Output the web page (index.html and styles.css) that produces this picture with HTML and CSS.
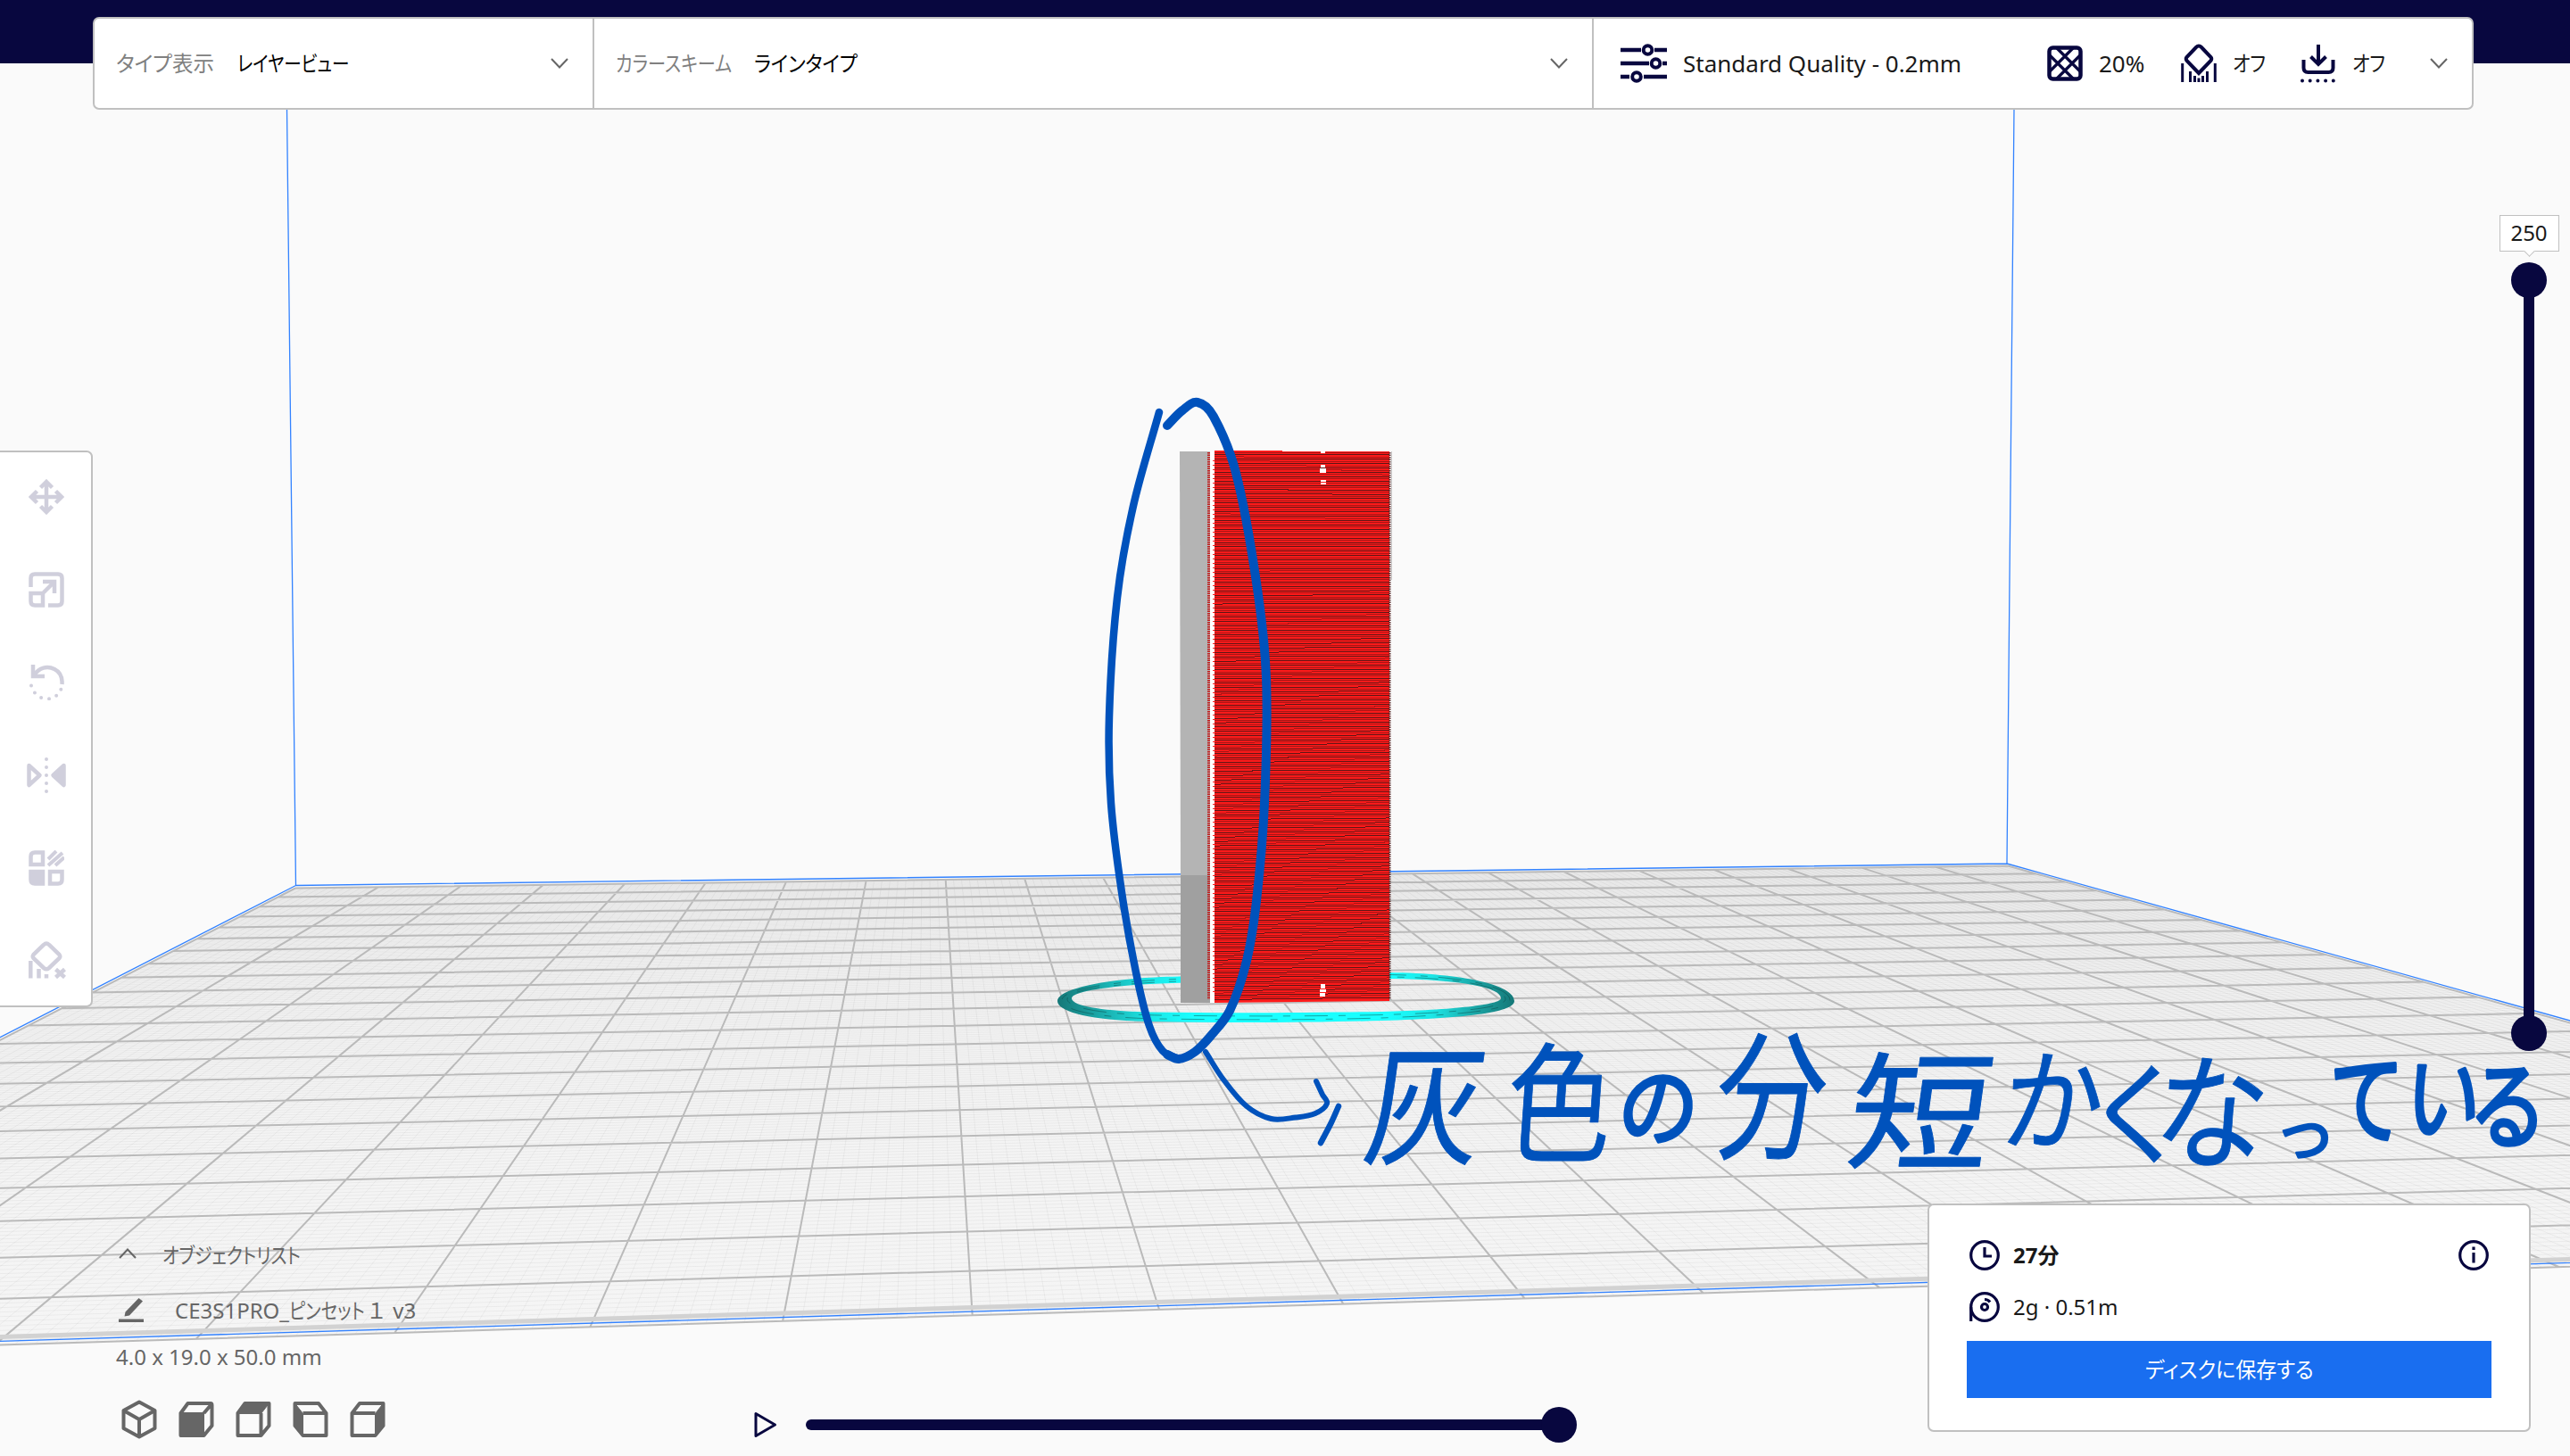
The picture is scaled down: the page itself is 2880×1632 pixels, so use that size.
FILE: index.html
```html
<!DOCTYPE html>
<html lang="ja">
<head>
<meta charset="utf-8">
<title>レイヤービュー</title>
<link rel="stylesheet" href="styles.css">
</head>
<body>
<div class="app">
  <svg class="scene" viewBox="0 0 2880 1632" aria-hidden="true">
    <defs>
      <linearGradient id="plate" x1="0" y1="970" x2="0" y2="1500" gradientUnits="userSpaceOnUse">
        <stop offset="0" stop-color="#f2f2f2"/><stop offset=".4" stop-color="#f3f3f3"/><stop offset="1" stop-color="#f5f5f5"/>
      </linearGradient>
      <linearGradient id="skirt" x1="1185" y1="0" x2="1697" y2="0" gradientUnits="userSpaceOnUse">
        <stop offset="0" stop-color="#157878"/><stop offset=".07" stop-color="#1a9c9c"/><stop offset=".2" stop-color="#1ce6e6"/>
        <stop offset=".3" stop-color="#1affff"/><stop offset=".72" stop-color="#1affff"/><stop offset=".82" stop-color="#1ce6e6"/>
        <stop offset=".93" stop-color="#1a9c9c"/><stop offset="1" stop-color="#157878"/>
      </linearGradient>
    </defs>
    <path class="plate" id="plate-fill"/>
    <path class="grid-minor" id="grid-minor"/>
    <path class="grid-major" id="grid-major"/>
    <path class="plate-edge" d="M0 1498.500L2880 1411.500"/>
    <path class="volume" d="M321.500 122L331.500 992.500L2249 968L2257 122M-705 1524.800L3757 1388.700L2249 968M331.500 992.500L-705 1524.800"/>
    <path fill="url(#skirt)" fill-rule="evenodd" d="M1382 1093C1330 1094 1290 1095 1271 1097C1215 1102 1185 1112 1185 1122C1185 1134 1222 1144 1290 1145C1380 1147 1480 1146 1548 1144C1650 1141 1697 1134 1697 1122C1697 1104 1640 1091 1557 1090ZM1382 1100C1330 1101 1290 1103 1271 1104C1225 1108 1201 1113 1201 1119C1201 1127 1230 1133 1290 1134.500C1380 1136 1480 1135 1548 1134C1630 1132 1682 1126 1682 1119C1682 1107 1640 1098 1557 1097Z"/>
    <path class="skirt-seam" d="M1356 1096.500C1240 1098 1190 1110 1190 1121C1190 1133 1232 1141 1300 1142C1400 1143.500 1480 1143 1548 1141C1650 1137 1692 1131 1692 1121C1692 1106 1640 1094 1557 1092.500"/>
    <path class="skirt-seam" d="M1356 1099C1245 1101 1196 1110 1196 1120C1196 1129 1232 1137 1300 1138C1400 1139.500 1480 1139 1548 1137.500C1640 1135 1687 1129 1687 1120C1687 1107 1640 1096 1557 1095"/>
    <path fill="#b4b4b4" d="M1322 506H1356V982H1323Z"/>
    <path fill="#a0a0a0" d="M1323 981H1356V1124H1323Z"/>
    <path fill="#fff" d="M1356 506H1361V1124H1356Z"/>
    <path fill="#ff1a1a" d="M1361 505H1437V506H1557V1122L1361 1124Z"/>
    <path class="fringe" d="M1354.500 507V1120"/>
    <path class="fringe-light" d="M1360 516V1115"/>
    <path class="fringe-dark" d="M1557.500 507V1120"/>
    <path fill="#c8c8c8" d="M1559 506h1v144h-1z"/>
    <path class="layer-soft" id="layers-soft"/>
    <path class="layer-dark" id="layers-dark"/>
    <path fill="#fff" d="M1480 506h5v2h-5zM1480 521h5v3h-5zM1479 525h7v5h-7zM1480 538h6v2h-6zM1480 541h6v2h-6zM1480 1103h5v5h-5zM1479 1109h7v3h-7zM1479 1113h6v4h-6z"/>
    <g class="ink" id="ink"></g>
    <g class="note">
      <text x="-4.600" transform="matrix(1.3 0 0 1.47 1531 1294) skewX(-9)">灰</text>
      <text x="-4.600" transform="matrix(1.18 0 0 1.45 1690.500 1291.400) skewX(-5)">色</text>
      <text class="heavy" x="-4.600" transform="matrix(.9 0 0 .99 1814.800 1277) skewX(-5)">の</text>
      <text x="-4.600" transform="matrix(1.24 0 0 1.57 1923.500 1287.300) skewX(-7)">分</text>
      <text x="-4.600" transform="matrix(1.6 0 0 1.43 2073 1299) skewX(-7)">短</text>
      <text x="-4.600" transform="matrix(1.13 0 0 1.25 2245 1280) skewX(-7)">か</text>
      <text x="-4.600" transform="matrix(1.18 0 0 1.25 2342 1295.300)">く</text>
      <text x="-4.600" transform="matrix(1.27 0 0 1.41 2415 1298.500) skewX(-7)">な</text>
      <text class="heavy" transform="matrix(.71 0 0 .7 2547.600 1296)">っ</text>
      <text class="heavy" transform="matrix(.84 0 0 1.12 2610.300 1273.500)">て</text>
      <text class="heavy" x="-4.600" transform="matrix(.85 0 0 1.08 2695.800 1270) skewX(-7)">い</text>
      <text class="heavy" transform="matrix(.88 0 0 1.07 2766.300 1278.700)">る</text>
    </g>
  </svg>

  <header class="topbar">
    <div class="menu">
      <div class="menu-cell view-type">
        <span class="label"><span class="jp s98">タイプ表示</span></span>
        <span class="value"><span class="jp s82">レイヤービュー</span></span>
        <svg class="chevron" viewBox="0 0 20 12"><path d="M1 1L10 10.500L19 1"/></svg>
      </div>
      <div class="menu-cell scheme">
        <span class="label"><span class="jp s84">カラースキーム</span></span>
        <span class="value"><span class="jp s91">ラインタイプ</span></span>
        <svg class="chevron" viewBox="0 0 20 12"><path d="M1 1L10 10.500L19 1"/></svg>
      </div>
      <div class="menu-cell settings">
        <svg class="icon-sliders" viewBox="0 0 54 44"><path d="M1 7H24M39 7H53M1 22H33M48 22H53M1 37H11M27 37H53"/><circle cx="31.500" cy="7" r="4.800"/><circle cx="40.500" cy="22" r="4.800"/><circle cx="19" cy="37" r="4.800"/></svg>
        <span class="profile">Standard Quality - 0.2mm</span>
        <svg class="icon-infill" viewBox="0 0 40 40"><rect x="2.500" y="2.500" width="35" height="35" rx="4"/><path d="M11 3L37 29M3 11L29 37M29 3L3 29M37 11L11 37"/></svg>
        <span class="num">20%</span>
        <svg class="icon-support" viewBox="0 0 40 44"><path d="M20 2.500Q21.500 2.500 23 4L33.500 15Q35 17 33.500 19L20 33L6.500 19Q5 17 6.500 15L17 4Q18.500 2.500 20 2.500Z"/><path class="bars" d="M1.700 22V43M10.500 31V43M15.500 36V43M20 38.500V43M24.500 36V43M29.500 31V43M38.300 22V43"/></svg>
        <span class="off"><span class="jp s88">オフ</span></span>
        <svg class="icon-adhesion" viewBox="0 0 40 44"><path d="M20 1V21M11.500 14.500L20 23L28.500 14.500M3.500 18V27Q3.500 32 8.500 32H31.500Q36.500 32 36.500 27V18"/><path class="dots" d="M2 41.500H39"/></svg>
        <span class="off"><span class="jp s88">オフ</span></span>
        <svg class="chevron" viewBox="0 0 20 12"><path d="M1 1L10 10.500L19 1"/></svg>
      </div>
    </div>
  </header>

  <main class="workspace">
    <nav class="toolbar">
      <svg viewBox="0 0 40 40"><path d="M20 5V35M5 20H35M13.500 9.500L20 3L26.500 9.500M13.500 30.500L20 37L26.500 30.500M9.500 13.500L3 20L9.500 26.500M30.500 13.500L37 20L30.500 26.500"/></svg>
      <svg viewBox="0 0 40 40"><path d="M2.500 17V7Q2.500 2.500 7 2.500H33Q37.500 2.500 37.500 7V33Q37.500 37.500 33 37.500H22M2.500 24H16V37.500H7Q2.500 37.500 2.500 33ZM16 24L29 11M16 11H29V24"/></svg>
      <svg viewBox="0 0 40 40"><path d="M5 0V13H18M6 12C12 3 21 1 29 5C35 8 38 14 37.500 22"/><path class="dots" d="M3 23.500C5 32 12 38 21 38.500C29 38 34 34 37 26"/></svg>
      <svg viewBox="0 0 44 40"><path d="M2.500 9L14.500 20L2.500 31Z"/><path class="solid" d="M41.500 9L29.500 20L41.500 31Z"/><path class="dots" d="M22 2V39"/></svg>
      <svg viewBox="0 0 40 40"><path d="M2.500 16V7Q2.500 2.500 7 2.500H16V16ZM24 24H37.500V33Q37.500 37.500 33 37.500H24Z"/><path class="solid" d="M2.500 24H16V37.500H7Q2.500 37.500 2.500 33Z"/><path class="hatch" d="M22 10L31 1M22 17L38 3M30 17L40 8"/></svg>
      <svg viewBox="0 0 42 42"><path d="M20 2.500Q21.500 2.500 23 4L34.500 15Q36 17 34.500 19L23 30Q20 32.500 17 30L5.500 19Q4 17 5.500 15L17 4Q18.500 2.500 20 2.500ZM30.500 31.500L40.500 40.500M40.500 31.500L30.500 40.500"/><path d="M2.300 22V41.500M11.500 31V41.500M20 37V41.500"/></svg>
    </nav>
    <aside class="layer-slider">
      <div class="layer-number">250</div>
      <div class="knob"></div>
      <div class="layer-track"></div>
      <div class="knob"></div>
    </aside>
  </main>

  <footer class="bottom">
    <section class="objects">
      <div class="objects-head">
        <svg class="chevron up" viewBox="0 0 20 12"><path d="M1 11L10 1.500L19 11"/></svg>
        <span class="jp s83">オブジェクトリスト</span>
      </div>
      <div class="objects-item">
        <svg class="icon-pencil" viewBox="0 0 28 28"><path d="M22.500 0L27 3.500L12 19.500L6.500 20.500L7.500 15.500ZM0 23.500H28V27H0Z"/></svg>
        <span>CE3S1PRO_</span><span class="kana"><span class="jp s82">ピンセット</span></span><span>１ v3</span>
      </div>
      <div class="objects-size">4.0 x 19.0 x 50.0 mm</div>
      <div class="views">
        <svg viewBox="0 0 40 44"><path d="M20 2.500L37.500 12V32L20 41.500L2.500 32V12ZM2.500 12L20 22L37.500 12M20 22V41"/></svg>
        <svg viewBox="0 0 40 44"><path d="M10.500 4H36Q37.500 4 37.500 6V29L28.500 40H2.500V15ZM28.500 15L37 5"/><path class="solid" d="M2 14.500H28.500V40H2Z"/></svg>
        <svg viewBox="0 0 40 44"><path d="M10.500 4H37.500V29L28.500 40H2.500V15ZM28.500 15V40"/><path class="solid" d="M10.500 4H37.500L28.500 15.500H2.500Z"/></svg>
        <svg viewBox="0 0 40 44"><path d="M2.500 4H29L37.500 15V40H11.500L2.500 29ZM11.500 15H37.500"/><path class="solid" d="M2.500 4L11.500 15.500V40L2.500 29Z"/></svg>
        <svg viewBox="0 0 40 44"><path d="M11 4H37.500V29L28.500 40H2.500V15ZM2.500 15H28.500"/><path class="solid" d="M37.500 4L28.500 15.500V40L37.500 29Z"/></svg>
      </div>
    </section>
    <section class="timeline">
      <svg class="icon-play" viewBox="0 0 26 30"><path d="M2 2.500V27.500L23.500 15Z"/></svg>
      <div class="time-track"></div>
      <div class="knob"></div>
    </section>
    <section class="job">
      <div class="job-row">
        <svg viewBox="0 0 34 34"><circle cx="17" cy="17" r="15.300"/><path d="M17 8V18H25"/></svg>
        <strong>27分</strong>
        <svg class="info" viewBox="0 0 34 34"><circle cx="17" cy="17" r="15.300"/><path d="M17 14V25.500M17 7.500V11"/></svg>
      </div>
      <div class="job-row">
        <svg viewBox="0 0 34 34"><circle cx="17" cy="17" r="15.300"/><path d="M1.700 17V33"/><circle cx="17" cy="17" r="3.500"/><path d="M17 8.500Q21 8.500 23 11.500"/></svg>
        <span>2g · 0.51m</span>
      </div>
      <button class="save"><span class="jp s96">ディスクに保存する</span></button>
    </section>
  </footer>
</div>
<script src="scene.js"></script>
</body>
</html>
```
FILE: styles.css
```css
* { box-sizing: border-box; }
body { margin: 0; font: 24px/32px "Noto Sans", "Noto Sans CJK JP", sans-serif; color: #191919; }
svg { display: block; flex: none; fill: none; }

.app { position: relative; width: 2880px; height: 1632px; overflow: hidden; background: #fafafa; display: grid; grid-template-rows: 71px 1278px 1fr; }
.scene { position: absolute; inset: 0; width: 2880px; height: 1632px; }
.topbar, .workspace, .bottom { position: relative; }

/* Japanese UI strings are set with condensed kana */
.jp { display: inline-block; white-space: nowrap; font-feature-settings: "palt"; transform-origin: 0 50%; }
.s82 { transform: scaleX(.815); }
.s83 { transform: scaleX(.833); }
.s84 { transform: scaleX(.84); }
.s88 { transform: scaleX(.88); }
.s91 { transform: scaleX(.91); }
.s96 { transform: scaleX(.96); transform-origin: 50% 50%; }
.s98 { transform: scaleX(.98); }

/* 3D view */
.plate { fill: url(#plate); }
.grid-minor { stroke: #000; stroke-opacity: .045; stroke-width: 1; }
.grid-major { stroke: #bababa; stroke-width: 2; }
.plate-edge { stroke: #d2d2d2; stroke-width: 5; }
.volume { stroke: #3282ff; stroke-width: 1.300; }
.skirt-seam { stroke: #0b4a4a; stroke-width: 1; stroke-dasharray: 26 12 8 16; opacity: .5; }
.fringe { stroke: #c01c1c; stroke-width: 3; stroke-dasharray: 1.500 1; }
.fringe-light { stroke: #ff1a1a; stroke-width: 2; stroke-dasharray: 1 4; }
.fringe-dark { stroke: #5a2020; stroke-width: 2; stroke-dasharray: 1.500 1; }
.layer-soft { stroke: #a81414; stroke-width: 1; shape-rendering: crispEdges; }
.layer-dark { stroke: #5c1616; stroke-width: 1; shape-rendering: crispEdges; }
.ink path { stroke: #0052bc; stroke-linecap: round; stroke-linejoin: round; }
.note text { font: 400 100px "Noto Sans CJK JP", sans-serif; fill: #0052bc; stroke: #0052bc; stroke-width: .6; stroke-linejoin: round; }
.note .heavy { stroke-width: 3.500; }

/* top menu */
.topbar { background: #08073f; }
.menu { width: 2668px; height: 104px; margin: 19px 0 0 104px; display: flex; background: #fff; border: 2px solid #c0c0c0; border-radius: 7px; }
.menu-cell { display: flex; align-items: center; border-right: 2px solid #c0c0c0; }
.menu-cell:last-child { border-right: 0; }
.view-type { width: 560px; padding: 0 27px 0 24px; }
.scheme { width: 1120px; padding: 0 27px 0 24px; }
.settings { flex: 1; padding-left: 29px; font-size: 26px; }
.label { color: #808080; }
.value { color: #000; flex: 1; }
.view-type .label { width: 136px; }
.scheme .label { width: 155px; }
.chevron { width: 20px; height: 12px; stroke: #666; stroke-width: 2; }
.icon-sliders { width: 54px; height: 44px; stroke: #08073f; stroke-width: 4.400; }
.icon-sliders circle { stroke-width: 4; }
.profile { width: 408px; margin-left: 17px; white-space: nowrap; }
.icon-infill { width: 40px; height: 40px; stroke: #08073f; stroke-width: 3.200; }
.icon-infill rect { stroke-width: 4.500; }
.num { width: 92px; margin-left: 18px; }
.icon-support { width: 40px; height: 44px; stroke: #08073f; stroke-width: 4; }
.icon-support .bars { stroke-width: 3; }
.off { width: 75px; margin-left: 18px; font-size: 24px; }
.icon-adhesion { width: 40px; height: 44px; margin-left: 1px; stroke: #08073f; stroke-width: 4; }
.icon-adhesion + .off { width: 87px; }
.dots { stroke-linecap: round; stroke-dasharray: 0 8.700; stroke-width: 4; }

/* left toolbar */
.workspace { display: flex; justify-content: space-between; align-items: flex-start; }
.toolbar { width: 104px; height: 624px; margin-top: 434px; padding-left: 2px; display: grid; grid-auto-rows: 104px; align-content: center; place-items: center; background: #fff; border: 2px solid #c0c0c0; border-left: 0; border-radius: 0 7px 7px 0; }
.toolbar svg { width: 40px; height: 40px; stroke: #d0cfdc; stroke-width: 4.500; }
.toolbar svg:nth-child(4) { width: 44px; stroke-linejoin: round; }
.toolbar svg:last-child { width: 42px; height: 42px; margin: -2px 0 0 2px; }
.toolbar .solid { fill: #d0cfdc; }
.toolbar .dots { stroke-dasharray: 0 9; }
.toolbar .hatch { stroke-width: 4; }

/* layer slider */
.layer-slider { width: 92px; margin-top: 170px; display: flex; flex-direction: column; align-items: center; }
.layer-number { position: relative; width: 67px; height: 41px; margin-bottom: 12px; background: #fff; border: 1px solid #c0c0c0; text-align: center; line-height: 38px; }
.layer-number::after { content: ""; position: absolute; left: 28px; bottom: -5px; width: 8px; height: 8px; background: #fff; border: solid #c0c0c0; border-width: 0 1px 1px 0; transform: rotate(45deg); }
.knob { width: 40px; height: 40px; border-radius: 50%; background: #08073f; flex: none; }
.layer-track { width: 12px; height: 808px; margin: -2px 0; background: #08073f; }

/* bottom row */
.bottom { display: flex; align-items: flex-start; }
.objects { width: 845px; padding: 42px 0 0 130px; color: #666; }
.objects-head { display: flex; align-items: center; height: 32px; }
.objects-head .chevron { margin: -5px 29px 0 3px; }
.objects-item { display: flex; align-items: center; height: 32px; margin-top: 30px; white-space: pre; }
.kana { width: 86px; }
.icon-pencil { width: 28px; height: 28px; margin: 0 35px 0 3px; }
.icon-pencil path { fill: #666; }
.objects-size { margin-top: 20px; }
.views { display: flex; gap: 24px; margin: 32px 0 0 6px; }
.views svg { width: 40px; height: 44px; stroke: #666; stroke-width: 4; stroke-linejoin: round; }
.views .solid { fill: #666; stroke-width: 1; }
.timeline { width: 922px; margin-top: 228px; display: flex; align-items: center; }
.icon-play { width: 26px; height: 30px; margin-right: 32px; stroke: #08073f; stroke-width: 3; stroke-linejoin: round; }
.time-track { width: 826px; height: 12px; margin-right: -2px; border-radius: 6px 0 0 6px; background: #08073f; }
.job { width: 676px; height: 256px; margin-left: 393px; padding: 39px 42px 0 42px; background: #fff; border: 2px solid #c0c0c0; border-radius: 7px; }
.job-row { display: flex; align-items: center; height: 34px; margin-bottom: 24px; padding: 0 3px 0 3px; }
.job-row svg { width: 34px; height: 34px; margin-right: 15px; stroke: #08073f; stroke-width: 3.200; }
.job-row .info { margin: 0 0 0 auto; }
.save { display: block; width: 588px; height: 64px; margin-top: -3px; border: 0; background: #196ef0; color: #fff; font: inherit; text-align: center; }
```
FILE: scene.js
```js
// Projects plate coordinates (cells of 10 mm) to the screen.
const CELLS = 22;

function projector(p) {
  const [[x0, y0], [x1, y1], [x2, y2], [x3, y3]] = p;
  const dx1 = x1 - x2, dx2 = x3 - x2, dx3 = x0 - x1 + x2 - x3;
  const dy1 = y1 - y2, dy2 = y3 - y2, dy3 = y0 - y1 + y2 - y3;
  const det = dx1 * dy2 - dx2 * dy1;
  const g = (dx3 * dy2 - dx2 * dy3) / det;
  const h = (dx1 * dy3 - dx3 * dy1) / det;
  return (u, v) => {
    const w = g * u + h * v + 1;
    return [
      ((x1 - x0 + g * x1) * u + (x3 - x0 + h * x3) * v + x0) / w,
      ((y1 - y0 + g * y1) * u + (y3 - y0 + h * y3) * v + y0) / w
    ].map(n => n.toFixed(2)).join(' ');
  };
}

const at = projector([[331, 995.5], [2250, 970.5], [3762, 1393], [-706, 1529]]);

function gridPath(count, skip) {
  let d = '';
  for (let i = 0; i <= count; i++) {
    if (skip && i % skip === 0) continue;
    const t = i / count;
    d += `M${at(t, 0)}L${at(t, 1)}M${at(0, t)}L${at(1, t)}`;
  }
  return d;
}

const set = (id, d) => document.getElementById(id).setAttribute('d', d);
set('plate-fill', `M${at(0, 0)}L${at(1, 0)}L${at(1, 1)}L${at(0, 1)}Z`);
set('grid-minor', gridPath(CELLS * 10, 10));
set('grid-major', gridPath(CELLS));

// Printed layers, alternating light and dark gaps.
const LAYERS = 250;
let soft = '', dark = '';
for (let i = 0; i < LAYERS; i++) {
  const left = 507 + i * (616 / LAYERS);
  const right = 507.5 + i * (613 / LAYERS);
  const line = `M1361 ${left.toFixed(2)}L1557 ${right.toFixed(2)}`;
  if (i % 2) dark += line; else soft += line;
}
set('layers-soft', soft);
set('layers-dark', dark);

// Pen strokes: width followed by the points the pen went through.
const strokes = [
  [8.5, 1299, 462, 1270, 567, 1252, 670, 1243, 803, 1245, 900, 1257, 1000, 1273, 1090, 1288, 1150, 1303, 1178, 1321, 1187],
  [10, 1308, 477, 1325, 460, 1342, 451, 1360, 467, 1385, 530, 1408, 653, 1419, 760, 1417, 900, 1408, 1010, 1397, 1077, 1378, 1133, 1356, 1162, 1339, 1179, 1321, 1187, 1308, 1182],
  [6, 1351, 1179, 1371, 1210, 1397, 1240, 1424.5, 1254, 1452, 1252.5, 1474, 1248, 1487, 1237, 1482, 1227, 1475, 1212],
  [6.5, 1500, 1240, 1492, 1258, 1480, 1281]
];

const ink = document.getElementById('ink');
for (const [width, ...c] of strokes) {
  const p = [];
  for (let i = 0; i < c.length; i += 2) p.push([c[i], c[i + 1]]);
  const tangent = i => {
    const a = p[Math.max(i - 1, 0)], b = p[Math.min(i + 1, p.length - 1)];
    const len = Math.hypot(b[0] - a[0], b[1] - a[1]);
    return [(b[0] - a[0]) / len, (b[1] - a[1]) / len];
  };
  let d = `M${p[0]}`;
  for (let i = 0; i < p.length - 1; i++) {
    const b = p[i], e = p[i + 1], s = tangent(i), t = tangent(i + 1);
    const k = Math.hypot(e[0] - b[0], e[1] - b[1]) / 3;
    d += `C${b[0] + s[0] * k} ${b[1] + s[1] * k} ${e[0] - t[0] * k} ${e[1] - t[1] * k} ${e[0]} ${e[1]}`;
  }
  const path = document.createElementNS('http://www.w3.org/2000/svg', 'path');
  path.setAttribute('d', d);
  path.setAttribute('stroke-width', width);
  ink.append(path);
}
```
